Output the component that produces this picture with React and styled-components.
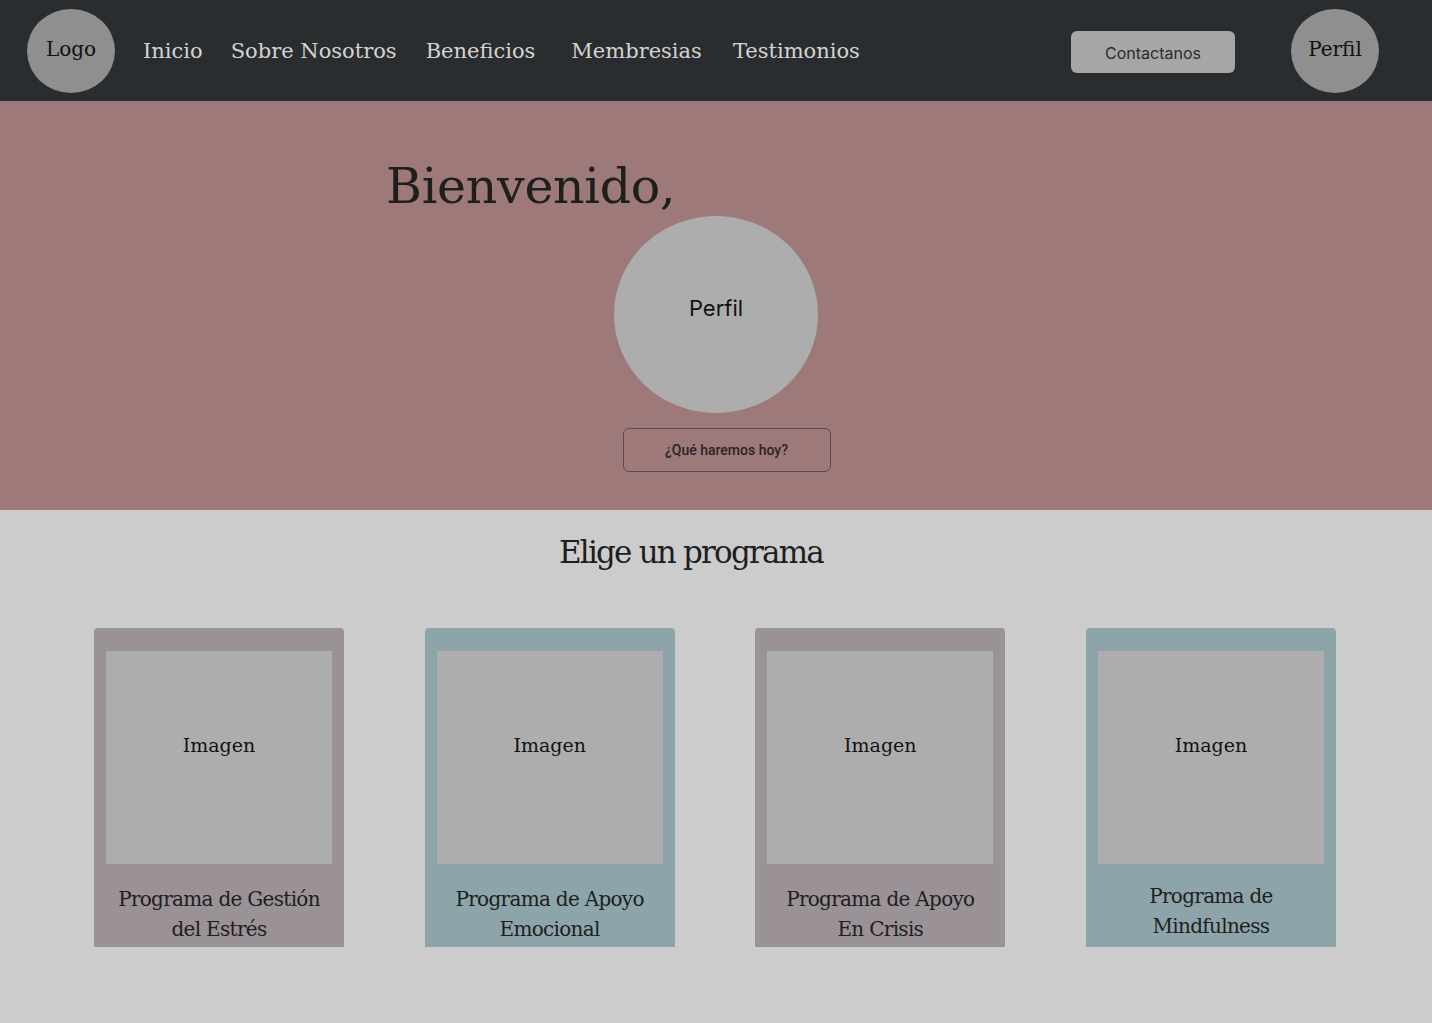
import styled, { createGlobalStyle } from "styled-components";

const GlobalStyle = createGlobalStyle`
  html, body {
    margin: 0;
    padding: 0;
    background: #cccccc;
  }
  * {
    box-sizing: border-box;
  }
`;

const serif = `"DejaVu Serif", "Liberation Serif", serif`;
const sans = `Inter, Roboto, "Noto Sans", sans-serif`;

const programs = [
  { title: "Programa de Gestión del Estrés", tone: "mauve" },
  { title: "Programa de Apoyo Emocional", tone: "teal" },
  { title: "Programa de Apoyo En Crisis", tone: "mauve" },
  { title: "Programa de Mindfulness", tone: "teal", narrow: true },
];

// spacing between links isn't even in the design
const navLinks = [
  { label: "Inicio", offset: 28 },
  { label: "Sobre Nosotros", offset: 28 },
  { label: "Beneficios", offset: 29 },
  { label: "Membresias", offset: 36 },
  { label: "Testimonios", offset: 31 },
];

export default function App() {
  return (
    <Page>
      <GlobalStyle />
      <Header>
        <Circle>Logo</Circle>
        <Nav>
          {navLinks.map((link) => (
            <NavLink key={link.label} $offset={link.offset}>
              {link.label}
            </NavLink>
          ))}
        </Nav>
        <ContactButton>Contactanos</ContactButton>
        <Circle>Perfil</Circle>
      </Header>

      <Hero>
        <Welcome>Bienvenido,</Welcome>
        <Avatar>Perfil</Avatar>
        <TodayButton>¿Qué haremos hoy?</TodayButton>
      </Hero>

      <Programs>
        <SectionTitle>Elige un programa</SectionTitle>
        <CardRow>
          {programs.map((p) => (
            <Card key={p.title} $tone={p.tone}>
              <ImageBox>Imagen</ImageBox>
              <CardTitle $narrow={p.narrow}>{p.title}</CardTitle>
            </Card>
          ))}
        </CardRow>
      </Programs>
    </Page>
  );
}

const Page = styled.div`
  width: 1432px;
  min-height: 1023px;
  background: #cccccc;
`;

const Header = styled.header`
  height: 101px;
  background: #2a2d2f;
  display: flex;
  align-items: center;
  padding: 0 53px 0 27px;
`;

const Circle = styled.div`
  width: 88px;
  height: 84px;
  border-radius: 50%;
  background: #8f8f8f;
  display: flex;
  align-items: center;
  justify-content: center;
  padding-bottom: 4px;
  font-family: ${serif};
  font-size: 20px;
  color: #111;
  flex-shrink: 0;
`;

const Nav = styled.nav`
  display: flex;
  align-items: center;
  flex: 1;
`;

const NavLink = styled.a`
  margin-left: ${(p) => p.$offset}px;
  font-family: ${serif};
  font-size: 21px;
  color: #d4d4d4;
  text-decoration: none;
  cursor: pointer;
`;

const ContactButton = styled.button`
  width: 164px;
  height: 42px;
  margin: 3px 56px 0 0;
  border: none;
  border-radius: 6px;
  background: #a6a6a6;
  font-family: ${sans};
  font-size: 16px;
  color: #2b2b2b;
  padding-top: 2px;
`;

const Hero = styled.section`
  height: 409px;
  background: #9d7a79;
  display: flex;
  flex-direction: column;
  align-items: center;
  padding-top: 56px;
`;

const Welcome = styled.h1`
  align-self: flex-start;
  margin: 0 0 0 386px;
  font-family: ${serif};
  font-weight: 400;
  font-size: 49px;
  line-height: 60px;
  letter-spacing: -0.3px;
  color: #1e1e1e;
`;

const Avatar = styled.div`
  width: 204px;
  height: 197px;
  border-radius: 50%;
  background: #adadad;
  display: flex;
  align-items: center;
  justify-content: center;
  padding-bottom: 14px;
  font-family: ${sans};
  font-size: 22px;
  color: #111;
  margin-top: -1px;
`;

const TodayButton = styled.button`
  width: 208px;
  height: 44px;
  margin: 15px 0 0 21px;
  background: transparent;
  border: 1px solid #5a4a4a;
  border-radius: 6px;
  font-family: Roboto, ${sans};
  font-weight: 500;
  font-size: 14px;
  color: #2a2424;
`;

const Programs = styled.section`
  padding: 22px 0 76px;
  display: flex;
  flex-direction: column;
  align-items: center;
`;

const SectionTitle = styled.h2`
  margin: 0 50px 0 0;
  font-family: ${serif};
  font-weight: 400;
  font-size: 31px;
  line-height: 40px;
  color: #1e1e1e;
  letter-spacing: -1.8px;
`;

const CardRow = styled.div`
  width: 100%;
  display: flex;
  justify-content: space-between;
  padding: 0 96px 0 94px;
  margin-top: 56px;
`;

const Card = styled.article`
  width: 250px;
  height: 319px;
  border-radius: 4px 4px 0 0;
  background: ${(p) => (p.$tone === "teal" ? "#8da5aa" : "#9a9296")};
  padding: 23px 12px 0;
  display: flex;
  flex-direction: column;
  align-items: center;
`;

const ImageBox = styled.div`
  width: 226px;
  height: 213px;
  background: #adadad;
  display: flex;
  align-items: center;
  justify-content: center;
  padding-bottom: 26px;
  font-family: ${serif};
  font-size: 19px;
  color: #111;
`;

const CardTitle = styled.h3`
  width: 212px;
  margin: ${(p) => (p.$narrow ? "17px" : "20px")} 0 0;
  font-family: ${serif};
  font-weight: 400;
  font-size: 20px;
  line-height: 30px;
  letter-spacing: -0.7px;
  text-align: center;
  color: #1e1e1e;
  padding: 0 ${(p) => (p.$narrow ? "24px" : "0")};
`;
